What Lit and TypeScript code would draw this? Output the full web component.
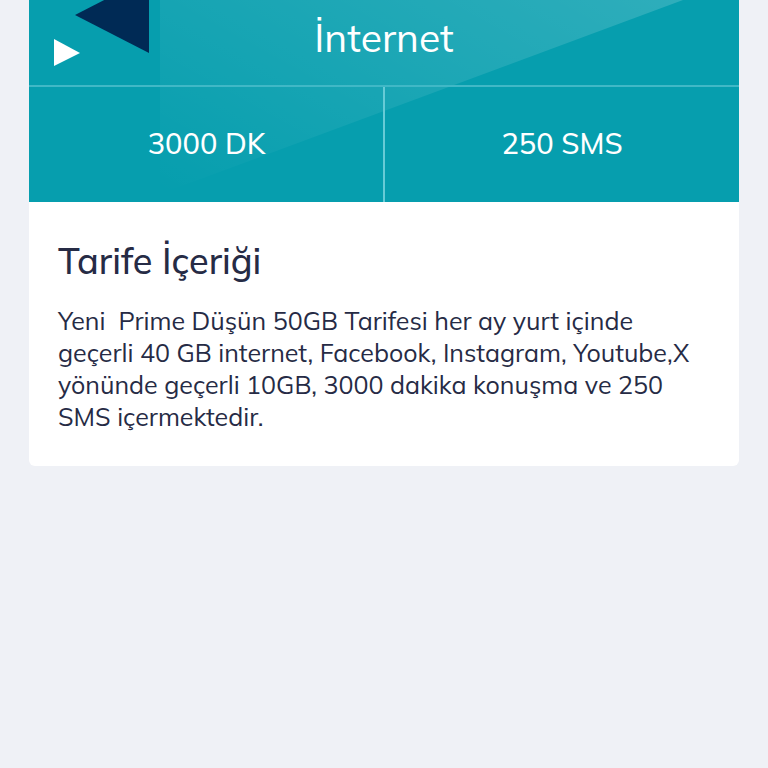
import { LitElement, html, css } from "lit";
import { customElement, property } from "lit/decorators.js";

@customElement("app-root")
export class AppRoot extends LitElement {
  @property() quotaTitle = "İnternet";
  @property() minutes = "3000 DK";
  @property() messages = "250 SMS";

  static styles = css`
    :host {
      display: block;
      min-height: 100vh;
      box-sizing: border-box;
      padding: 0 29px;
      background: #eff1f6;
      color: #262b45;
      font-family: Mulish, Muli, Lato, "Noto Sans", sans-serif;
    }
    .card {
      background: #fff;
      border-radius: 0 0 6px 6px;
      overflow: hidden;
    }
    .hero {
      position: relative;
      background: #069eae;
      color: #fff;
      text-align: center;
    }
    .beam,
    .shapes {
      position: absolute;
      top: 0;
      left: 0;
    }
    .beam {
      width: 100%;
      height: 100%;
    }
    .title,
    .quotas {
      position: relative;
      margin: 0;
    }
    .title {
      padding: 14px 0 23px;
      font-size: 39px;
      line-height: 48px;
      font-weight: 400;
      border-bottom: 2px solid #40b8c6;
    }
    .quotas {
      display: grid;
      grid-template-columns: 1fr 1fr;
      padding: 0;
      list-style: none;
      font-size: 29px;
      line-height: 36px;
      font-weight: 500;
    }
    .quota {
      padding: 38px 0 41px;
    }
    .quota + .quota {
      margin-left: -1px;
      border-left: 2px solid #66cbd6;
    }
    .details {
      padding: 36px 29px 33px;
    }
    .heading {
      margin: 0 0 21px;
      font-size: 36px;
      line-height: 46px;
      font-weight: 500;
    }
    .text {
      margin: 0;
      font-size: 25px;
      line-height: 32px;
    }
  `;

  render() {
    return html`
      <article class="card">
        <header class="hero">
          <svg class="beam" viewBox="0 0 710 202" preserveAspectRatio="none" aria-hidden="true">
            <defs>
              <linearGradient id="glow" gradientUnits="userSpaceOnUse" x1="150" y1="200" x2="400" y2="-250">
                <stop offset="0" stop-color="#fff" stop-opacity="0" />
                <stop offset="1" stop-color="#fff" stop-opacity=".2" />
              </linearGradient>
            </defs>
            <path d="M131 0H654L131 194Z" fill="url(#glow)" />
          </svg>
          <svg class="shapes" width="130" height="72" viewBox="0 0 130 72" aria-hidden="true">
            <path d="M46 15L120 -23V53Z" fill="#002a55" />
            <path d="M25 39L51 53L25 66Z" fill="#fff" />
          </svg>
          <h1 class="title">${this.quotaTitle}</h1>
          <ul class="quotas">
            <li class="quota">${this.minutes}</li>
            <li class="quota">${this.messages}</li>
          </ul>
        </header>
        <section class="details">
          <h2 class="heading">Tarife İçeriği</h2>
          <p class="text">
            Yeni&nbsp; Prime Düşün 50GB Tarifesi her ay yurt içinde geçerli 40 GB
            internet, Facebook, Instagram, Youtube,X yönünde geçerli 10GB, 3000
            dakika konuşma ve 250 SMS içermektedir.
          </p>
        </section>
      </article>
    `;
  }
}
